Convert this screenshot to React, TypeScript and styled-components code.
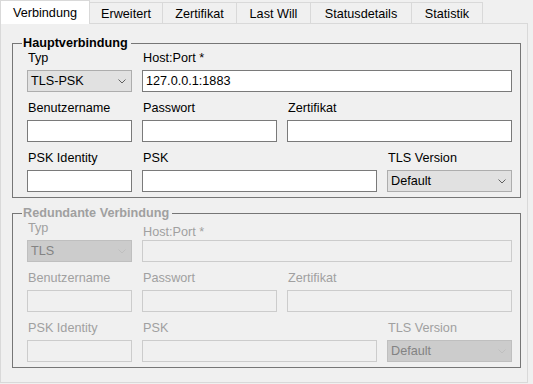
import React from "react";
import styled, { createGlobalStyle } from "styled-components";

const GlobalStyle = createGlobalStyle`
  html, body { margin: 0; padding: 0; background: #f0f0f0; }
  body {
    font-family: "Liberation Sans", Arial, sans-serif;
    font-size: 12.67px;
    color: #000;
  }
  * { box-sizing: border-box; }
`;

const Window = styled.div`
  width: 533px;
  height: 384px;
  display: flex;
  flex-direction: column;
  background: #f0f0f0;
  overflow: hidden;
`;

const TabStrip = styled.div`
  display: flex;
  align-items: flex-end;
  height: 23px;
`;

const Tab = styled.div<{ $w: number; $active?: boolean }>`
  width: ${(p) => p.$w}px;
  height: ${(p) => (p.$active ? 24 : 21)}px;
  margin-bottom: ${(p) => (p.$active ? -1 : 0)}px;
  margin-left: ${(p) => (p.$active ? 0 : -1)}px;
  position: relative;
  z-index: ${(p) => (p.$active ? 2 : 1)};
  background: ${(p) => (p.$active ? "#ffffff" : "#f0f0f0")};
  border: 1px solid #d9d9d9;
  border-bottom: none;
  padding-top: ${(p) => (p.$active ? 3 : 2)}px;
  line-height: 18px;
  text-align: center;
  white-space: nowrap;
`;

const Panel = styled.div`
  width: 528px;
  height: 360px;
  border: 1px solid #d9d9d9;
  background: #f0f0f0;
  padding: 12px 6px 0 11px;
  display: flex;
  flex-direction: column;
  gap: 8px;
`;

const Group = styled.fieldset<{ $disabled?: boolean }>`
  margin: 0;
  padding: 0;
  min-width: 0;
  border: 1px solid #767676;
`;

const Legend = styled.legend<{ $disabled?: boolean }>`
  margin-left: 9px;
  padding: 0 3px 0 1px;
  font-weight: bold;
  line-height: 15px;
  color: ${(p) => (p.$disabled ? "#a0a0a0" : "#000")};
`;

const Grid = styled.div`
  display: grid;
  grid-template-columns: 105px 135px 90px 125px;
  column-gap: 10px;
  row-gap: 9px;
  padding: 0 0 5px 14px;
`;

const Field = styled.div<{ $span?: number }>`
  display: flex;
  flex-direction: column;
  grid-column: span ${(p) => p.$span ?? 1};
`;

const Label = styled.div<{ $disabled?: boolean; $drop?: boolean }>`
  height: 15px;
  line-height: 15px;
  padding-left: 1px;
  margin-top: ${(p) => (p.$drop ? 4 : 0)}px;
  margin-bottom: ${(p) => (p.$drop ? 0 : 4)}px;
  white-space: nowrap;
  color: ${(p) => (p.$disabled ? "#a0a0a0" : "#000")};
`;

const TextBox = styled.input`
  height: 22px;
  width: 100%;
  margin: 0;
  padding: 0 3px;
  border: 1px solid #7a7a7a;
  background: #ffffff;
  font: inherit;
  color: #000;
  outline: none;
  &:disabled {
    border-color: #cccccc;
    background: #f0f0f0;
    color: #838383;
  }
`;

const Combo = styled.div<{ $disabled?: boolean }>`
  height: 22px;
  display: flex;
  align-items: center;
  justify-content: space-between;
  padding: 0 5px 0 3px;
  border: 1px solid ${(p) => (p.$disabled ? "#bfbfbf" : "#adadad")};
  background: ${(p) => (p.$disabled ? "#cccccc" : "#e1e1e1")};
  color: ${(p) => (p.$disabled ? "#838383" : "#000")};
  white-space: nowrap;
`;

const Chevron = ({ disabled }: { disabled?: boolean }) => (
  <svg width="8" height="5" viewBox="0 0 8 5">
    <polyline
      points="0.5,0.5 4,4 7.5,0.5"
      fill="none"
      stroke={disabled ? "#bfbfbf" : "#606060"}
      strokeWidth="1"
    />
  </svg>
);

type GroupProps = {
  title: string;
  typ: string;
  host?: string;
  disabled?: boolean;
};

const ConnectionGroup = ({ title, typ, host, disabled }: GroupProps) => (
  <Group $disabled={disabled}>
    <Legend $disabled={disabled}>{title}</Legend>
    <Grid>
      <Field>
        <Label $disabled={disabled}>Typ</Label>
        <Combo $disabled={disabled}>
          <span>{typ}</span>
          <Chevron disabled={disabled} />
        </Combo>
      </Field>
      <Field $span={3}>
        <Label $disabled={disabled} $drop={disabled}>
          Host:Port *
        </Label>
        <TextBox disabled={disabled} defaultValue={host ?? ""} readOnly />
      </Field>

      <Field>
        <Label $disabled={disabled}>Benutzername</Label>
        <TextBox disabled={disabled} readOnly />
      </Field>
      <Field>
        <Label $disabled={disabled}>Passwort</Label>
        <TextBox disabled={disabled} readOnly />
      </Field>
      <Field $span={2}>
        <Label $disabled={disabled}>Zertifikat</Label>
        <TextBox disabled={disabled} readOnly />
      </Field>

      <Field>
        <Label $disabled={disabled}>PSK Identity</Label>
        <TextBox disabled={disabled} readOnly />
      </Field>
      <Field $span={2}>
        <Label $disabled={disabled}>PSK</Label>
        <TextBox disabled={disabled} readOnly />
      </Field>
      <Field>
        <Label $disabled={disabled}>TLS Version</Label>
        <Combo $disabled={disabled}>
          <span>Default</span>
          <Chevron disabled={disabled} />
        </Combo>
      </Field>
    </Grid>
  </Group>
);

const tabs = [
  { label: "Verbindung", w: 90 },
  { label: "Erweitert", w: 74 },
  { label: "Zertifikat", w: 75 },
  { label: "Last Will", w: 75 },
  { label: "Statusdetails", w: 102 },
  { label: "Statistik", w: 72 },
];

export default function App() {
  return (
    <>
      <GlobalStyle />
      <Window>
        <TabStrip>
          {tabs.map((t, i) => (
            <Tab key={t.label} $w={t.w} $active={i === 0}>
              {t.label}
            </Tab>
          ))}
        </TabStrip>
        <Panel>
          <ConnectionGroup title="Hauptverbindung" typ="TLS-PSK" host="127.0.0.1:1883" />
          <ConnectionGroup title="Redundante Verbindung" typ="TLS" disabled />
        </Panel>
      </Window>
    </>
  );
}
